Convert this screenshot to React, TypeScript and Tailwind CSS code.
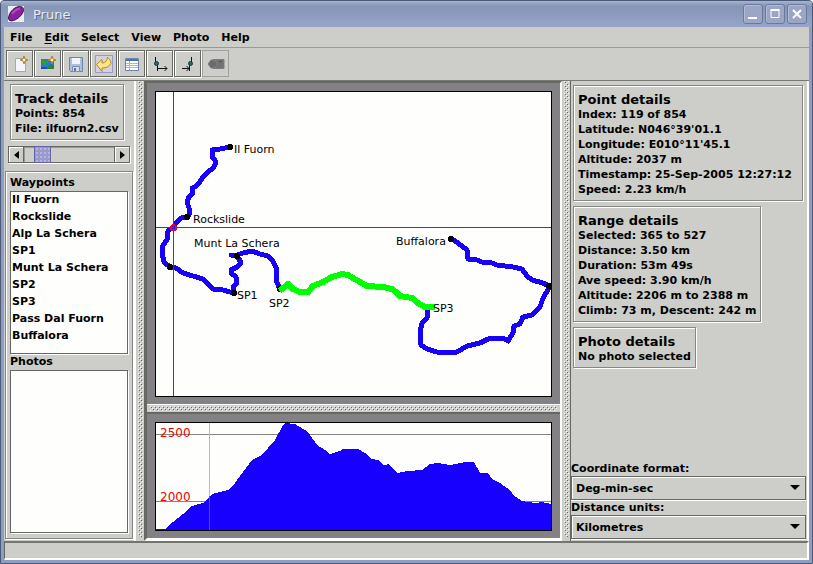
import type { ReactNode } from "react";

const waypoints = [
  "Il Fuorn",
  "Rockslide",
  "Alp La Schera",
  "SP1",
  "Munt La Schera",
  "SP2",
  "SP3",
  "Pass Dal Fuorn",
  "Buffalora",
];

const trackStart =
  "230,147 220,149 212,150 212,157 215,160 215,165 212,169 208,172 203,177 199,183 195,187 192,188 193,193 189,197 187,202 189,208 189,215 187,217 181,218 176,223 173,227 168,231 167,240 163,245 162,253 164,262 170,267 176,268 183,273 193,276 203,279 208,284 213,289 223,290 230,292 234,293 233,287 237,283 236,277 231,273 231,270 237,267 241,263 239,259 237,256 231,255 237,255 243,253 252,251 260,254 268,256 272,260 276,267 276,280 279,287";
const trackRange =
  "282,289 288,284 293,289 300,292 308,292 313,286 323,282 332,277 342,274 348,275 353,278 360,282 367,286 383,287 392,289 396,292 400,296 412,298 418,303 425,307 432,307";
const trackEnd =
  "427,309 427,318 422,323 420,332 421,345 427,349 437,352 457,352 467,346 480,343 488,339 503,338 508,341 513,333 514,326 520,324 523,317 532,315 540,307 543,298 548,290 549,286 543,283 532,280 527,276 522,269 513,267 497,265 492,263 482,262 477,260 468,259 467,250 458,243 452,239";
const profile =
  "156,529 165,529 173,522 183,514 192,506 203,503 212,494 228,490 235,483 240,476 252,460 262,455 275,440 283,425 285,423 295,424 300,427 308,432 317,445 325,450 330,454 340,451 343,449 358,449 365,453 372,459 378,460 384,465 389,464 397,473 407,471 422,470 430,464 438,463 450,465 465,462 474,462 480,473 488,473 492,479 500,483 511,491 513,495 522,501 535,503 542,502 551,504 551,530 156,530";

const markers = [
  [230, 147],
  [187, 217],
  [170, 267],
  [234, 293],
  [237, 256],
  [280, 289],
  [451, 239],
  [549, 286],
  [430, 307],
];

const mapLabels: [string, number, number][] = [
  ["Il Fuorn", 234, 153],
  ["Rockslide", 193, 223],
  ["Munt La Schera", 194, 247],
  ["SP1", 237, 299],
  ["SP2", 269, 307],
  ["Buffalora", 396, 245],
  ["SP3", 433, 312],
];

function Bumps({ id, className }: { id: string; className: string }) {
  return (
    <svg className={className} aria-hidden="true">
      <defs>
        <pattern id={id} width="4" height="4" patternUnits="userSpaceOnUse">
          <path d="M0 0h1v1H0zM2 2h1v1H2z" fill="#fff" />
          <path d="M1 1h1v1H1zM3 3h1v1H3z" fill="#666963" />
        </pattern>
      </defs>
      <rect width="100%" height="100%" fill={`url(#${id})`} />
    </svg>
  );
}

function Star() {
  return (
    <path
      d="M12 0l1 3 3 1-3 1-1 3-1-3-3-1 3-1z"
      fill="#fff6c0"
      stroke="#a8842c"
      strokeWidth="1"
    />
  );
}

const tools: { label: string; icon: ReactNode; disabled?: boolean }[] = [
  {
    label: "Open file",
    icon: (
      <>
        <path d="M3.5 2.5h10v13h-10z" fill="#f4f6fb" stroke="#a5a9b4" />
        <Star />
      </>
    ),
  },
  {
    label: "Add photos",
    icon: (
      <>
        <path d="M1 3h13v10H1z" fill="#2f74d8" />
        <path d="M6 13l3-3 2-2 3 2v3z" fill="#238a2a" />
        <path d="M2 4h3v1h3v2H6v2H3V7H2z" fill="#25a52d" />
        <path d="M1 11h6v2H1z" fill="#1d50a0" />
        <path d="M8 4h2v2H8z" fill="#d33" />
        <Star />
      </>
    ),
  },
  {
    label: "Save",
    icon: (
      <>
        <path d="M1.5 1.5h13v14h-12l-1-1z" fill="#aebfdb" stroke="#6c85ad" />
        <path d="M4 2h8v6H4z" fill="#f1f4f8" />
        <path d="M4.500 10.500h7v5h-7z" fill="#d7dde5" stroke="#7e8fac" />
        <path d="M6 12h2v3H6z" fill="#5676a7" />
      </>
    ),
  },
  {
    label: "Undo",
    icon: (
      <>
        <path d="M-.5-.5h17v17h-17z" fill="#d3d3dc" stroke="#9898cc" />
        <path
          d="M.5 8.500L6 3.500V7c3 0 5-2 5.500-5.500 2 1 3.500 3.500 3.500 6-1.500 3-5 4.500-9 4.500v3.500z"
          fill="#ffe58a"
          stroke="#bd8618"
          strokeLinejoin="round"
        />
      </>
    ),
  },
  {
    label: "Edit point",
    icon: (
      <>
        <path d="M1.500 2.500h13v12h-13z" fill="#fff" stroke="#6d86ad" />
        <path d="M2 3h12v2H2z" fill="#4f74ae" />
        <path d="M2 7.500h12M2 9.500h12M2 11.500h12M5.500 5v9" stroke="#a9b6cf" />
      </>
    ),
  },
  {
    label: "Set range start",
    icon: (
      <>
        <path d="M3.500 1v5M5.500 9v6" stroke="#111" />
        <path d="M5 12.500h10M12.500 10l2.500 2.500-2.500 2.500" stroke="#111" fill="none" />
        <circle cx="4.500" cy="7.500" r="2" fill="#27686b" stroke="#123b3e" />
      </>
    ),
  },
  {
    label: "Set range end",
    icon: (
      <>
        <path d="M11.500 1v5M9.500 9v6" stroke="#111" />
        <path d="M2 12.500h7M6.500 10L9 12.500 6.500 15" stroke="#111" fill="none" />
        <circle cx="10.500" cy="7.500" r="2" fill="#27686b" stroke="#123b3e" />
      </>
    ),
  },
  {
    label: "Connect photo",
    disabled: true,
    icon: (
      <>
        <path d="M5 3.500h11v9H5z" fill="#727272" stroke="#7c7c7c" />
        <path d="M0 8l3-4h4l2 4-2 4H3z" fill="#6a6a6a" stroke="#808080" />
        <path d="M11 5h3v1h-3z" fill="#555" />
      </>
    ),
  },
];

function Details({
  title,
  lines,
  className,
}: {
  title: string;
  lines: string[];
  className?: string;
}) {
  return (
    <section
      className={`border border-[#848884] px-1 pt-[7px] pb-[3px] shadow-[inset_1px_1px_#fff,1px_1px_#fff] ${className ?? ""}`}
    >
      <h2 className="text-[13px] leading-[14px]">{title}</h2>
      {lines.map((line) => (
        <p key={line} className="whitespace-nowrap">
          {line}
        </p>
      ))}
    </section>
  );
}

function Combo({ id, label, options }: { id: string; label: string; options: string[] }) {
  return (
    <div>
      <label htmlFor={id} className="block">
        {label}
      </label>
      <div className="relative">
        <select
          id={id}
          className="block h-6 w-full appearance-none border border-[#666963] bg-[#cdcec9] pl-1 shadow-[inset_1px_1px_#fff,0_1px_#fff]"
        >
          {options.map((o) => (
            <option key={o}>{o}</option>
          ))}
        </select>
        <svg
          viewBox="0 0 10 5"
          className="pointer-events-none absolute top-[9px] right-1.5 h-[5px] w-2.5"
          aria-hidden="true"
        >
          <path d="M0 0h10L5 5z" />
        </svg>
      </div>
    </div>
  );
}

function ListBox({ id, label, items }: { id: string; label: string; items: string[] }) {
  return (
    <div className="flex min-h-0 flex-1 flex-col">
      <label htmlFor={id} className="leading-4">
        {label}
      </label>
      <select
        id={id}
        size={9}
        className="min-h-0 w-full flex-1 appearance-none overflow-hidden border border-[#666963] bg-[#fefefc] pt-px shadow-[1px_1px_#fff]"
      >
        {items.map((item) => (
          <option key={item} className="h-[17px] px-px py-0 leading-[17px] font-bold">
            {item}
          </option>
        ))}
      </select>
    </div>
  );
}

const arrowButton =
  "flex h-full w-4 items-center justify-center border border-[#666963] shadow-[inset_1px_1px_#fff]";
const windowButton =
  "flex h-5 w-5 items-center justify-center rounded-[3px] border border-[#687aa2] bg-[#9aa6c4] shadow-[inset_1px_1px_#b3bcd3]";

export default function App() {
  return (
    <div className="flex h-screen w-full flex-col rounded-t-[4px] border border-[#4b5978] bg-[#8f9dc1] font-['DejaVu_Sans',sans-serif] text-[11px] leading-[15px] font-bold text-black">
      <header className="flex h-[26px] shrink-0 items-center rounded-t-[3px] bg-linear-to-b from-[#a9b4cf] via-[#8495b5] via-20% to-[#98a5c9] pr-[5px] pl-[7px]">
        <svg viewBox="0 0 16 16" className="h-4 w-4" aria-hidden="true">
          <path d="M0 0h16v16H0z" fill="#e9edf4" />
          <path
            d="M.5 12C1 7 5 2 10 .8c4-1 6 1 5.500 3.700C14.500 9 10 13 5.500 14.500c-3 1-5 0-5-2.500z"
            fill="#8a219c"
            stroke="#3c0d4a"
          />
          <path d="M4 8C6 5 9 3 12 2.500" stroke="#b04fc0" strokeWidth="2" fill="none" />
        </svg>
        <h1 className="ml-2 flex-1 pl-px text-[13px] font-normal text-[#e8ebf2] [text-shadow:1px_1px_#596987]">
          Prune
        </h1>
        <div className="flex gap-0.5">
          <button type="button" aria-label="Minimise" className={windowButton}>
            <svg viewBox="0 0 12 12" className="h-3 w-3">
              <path d="M1 9h9v2H1z" fill="#fff" />
            </svg>
          </button>
          <button type="button" aria-label="Maximise" className={windowButton}>
            <svg viewBox="0 0 12 12" className="h-3 w-3">
              <path d="M2 2.500h8v7H2z" fill="none" stroke="#fff" />
              <path d="M1.500 2h9" stroke="#fff" strokeWidth="2" />
            </svg>
          </button>
          <button type="button" aria-label="Close" className={windowButton}>
            <svg viewBox="0 0 12 12" className="h-3 w-3">
              <path d="M2 2l8 8M10 2l-8 8" stroke="#fff" strokeWidth="2" />
            </svg>
          </button>
        </div>
      </header>

      <div className="mx-[3px] mb-[3px] flex min-h-0 flex-1 flex-col bg-[#cdcec9]">
        <nav className="flex h-[21px] shrink-0 items-center border-b border-[#999a98]">
          <button type="button" className="px-1.5">
            File
          </button>
          <button type="button" className="px-1.5 underline-offset-2">
            <span className="underline">E</span>dit
          </button>
          <button type="button" className="px-1.5">
            Select
          </button>
          <button type="button" className="px-1.5">
            View
          </button>
          <button type="button" className="px-1.5">
            Photo
          </button>
          <button type="button" className="px-1.5">
            Help
          </button>
        </nav>

        <div className="flex h-8 shrink-0 gap-px pt-0.5 pl-0.5">
          {tools.map(({ label, icon, disabled }) => (
            <button
              key={label}
              type="button"
              aria-label={label}
              disabled={disabled}
              className="flex h-[27px] w-[27px] items-center justify-center border border-[#666963] shadow-[inset_1px_1px_#fff,1px_1px_#fff] disabled:border-[#a0a19e] disabled:shadow-none"
            >
              <svg viewBox="0 0 16 16" fill="none" className="h-4 w-4 overflow-visible">
                {icon}
              </svg>
            </button>
          ))}
        </div>

        <main className="flex min-h-0 flex-1 border-t border-[#777a75]">
          <aside className="flex w-[132px] shrink-0 flex-col border-r-2 border-white pt-[3px]">
            <Details
              title="Track details"
              lines={["Points: 854", "File: ilfuorn2.csv"]}
              className="ml-1.5 w-fit"
            />
            <div className="mx-1 mt-1.5 flex h-[17px] shrink-0 shadow-[1px_1px_#fff]">
              <button type="button" aria-label="Previous point" className={arrowButton}>
                <svg viewBox="0 0 5 8" className="h-2 w-[5px]">
                  <path d="M5 0v8L0 4z" />
                </svg>
              </button>
              <input
                type="range"
                aria-label="Current point"
                min={1}
                max={854}
                defaultValue={119}
                className="h-full min-w-0 flex-1 appearance-none border-y border-[#666963] bg-[#cdcec9] shadow-[inset_1px_1px_#999] [&::-webkit-slider-thumb]:h-[17px] [&::-webkit-slider-thumb]:w-[17px] [&::-webkit-slider-thumb]:appearance-none [&::-webkit-slider-thumb]:border [&::-webkit-slider-thumb]:border-[#6464a0] [&::-webkit-slider-thumb]:bg-[#9999cc] [&::-webkit-slider-thumb]:bg-[radial-gradient(#b4b4e4_1px,transparent_1px)] [&::-webkit-slider-thumb]:bg-size-[4px_4px]"
              />
              <button type="button" aria-label="Next point" className={arrowButton}>
                <svg viewBox="0 0 5 8" className="h-2 w-[5px]">
                  <path d="M0 0v8l5-4z" />
                </svg>
              </button>
            </div>
            <div className="mx-px mt-2 mb-0.5 flex min-h-0 flex-1 flex-col border border-[#848884] px-1 pt-[3px] pb-[5px] shadow-[inset_1px_1px_#fff,1px_1px_#fff]">
              <ListBox id="waypoints" label="Waypoints" items={waypoints} />
              <ListBox id="photos" label="Photos" items={[]} />
            </div>
          </aside>

          <div className="w-2 shrink-0 px-0.5 pb-1">
            <Bumps id="bumps-left" className="h-full w-[5px]" />
          </div>

          <div className="flex min-w-0 flex-1 flex-col border-t-2 border-r-2 border-b-[3px] border-l-[3px] border-t-[#666963] border-r-white border-b-white border-l-[#666963]">
            <div className="min-h-0 flex-1 bg-[#848184] px-2 pt-2 pb-[7px]">
              <svg
                viewBox="156 92 395 304"
                shapeRendering="crispEdges"
                role="img"
                aria-label="Track map"
                className="h-full w-full border border-black bg-[#fefefc] font-normal"
              >
                <g fill="none" stroke="#1800ff" strokeWidth="5" strokeLinejoin="round">
                  <polyline points={trackStart} />
                  <polyline points={trackEnd} />
                </g>
                {markers.map(([x, y]) => (
                  <circle key={`${x}-${y}`} cx={x} cy={y} r="3" />
                ))}
                <polyline
                  points={trackRange}
                  fill="none"
                  stroke="#0f0"
                  strokeWidth="6"
                  strokeLinejoin="round"
                  strokeLinecap="square"
                />
                <path d="M156 227.500h395M173.500 92v304" stroke="#f0000c" />
                <circle cx="173.500" cy="227.500" r="2.500" fill="none" stroke="#f00" strokeWidth="2" />
                {mapLabels.map(([text, x, y]) => (
                  <text key={text} x={x} y={y}>
                    {text}
                  </text>
                ))}
              </svg>
            </div>
            <div className="h-2.5 shrink-0 border-t border-b-2 border-t-white border-b-[#666963] bg-[#cdcec9] px-[3px] pt-px">
              <Bumps id="bumps-middle" className="h-[5px] w-full" />
            </div>
            <div className="h-[124px] shrink-0 bg-[#848184] px-2 pt-2 pb-[7px]">
              <svg
                viewBox="156 423 395 107"
                shapeRendering="crispEdges"
                role="img"
                aria-label="Altitude profile"
                className="h-full w-full border border-black bg-[#fefefc] font-normal"
              >
                <path d="M156 434.500h395M156 501.500h395" stroke="#848484" />
                <polygon points={profile} fill="#1800ff" />
                <path d="M209.500 423v73" stroke="#f5c400" />
                <path d="M209.500 496v34" stroke="#f01050" />
                <g fill="#f00000" fontSize="12">
                  <text x="160" y="437">
                    2500
                  </text>
                  <text x="160" y="501">
                    2000
                  </text>
                </g>
              </svg>
            </div>
          </div>

          <div className="w-2 shrink-0 px-0.5 pb-1">
            <Bumps id="bumps-right" className="h-full w-[5px]" />
          </div>

          <aside className="flex w-[239px] shrink-0 flex-col border-r-2 border-l border-r-white border-l-[#666963]">
            <div className="flex flex-1 flex-col items-start gap-[5px] pt-1 pr-1 pl-0.5">
              <Details
                title="Point details"
                lines={[
                  "Index: 119 of 854",
                  "Latitude: N046°39'01.1",
                  "Longitude: E010°11'45.1",
                  "Altitude: 2037 m",
                  "Timestamp: 25-Sep-2005 12:27:12",
                  "Speed: 2.23 km/h",
                ]}
                className="w-full"
              />
              <Details
                title="Range details"
                lines={[
                  "Selected: 365 to 527",
                  "Distance: 3.50 km",
                  "Duration: 53m 49s",
                  "Ave speed: 3.90 km/h",
                  "Altitude: 2206 m to 2388 m",
                  "Climb: 73 m, Descent: 242 m",
                ]}
              />
              <Details title="Photo details" lines={["No photo selected"]} />
            </div>
            <div className="pr-px pb-0.5">
              <Combo
                id="coordinate-format"
                label="Coordinate format:"
                options={["Deg-min-sec", "Deg-min", "Degrees"]}
              />
              <Combo
                id="distance-units"
                label="Distance units:"
                options={["Kilometres", "Miles"]}
              />
            </div>
          </aside>
        </main>

        <footer className="h-[19px] shrink-0 border-t-2 border-r-2 border-b-2 border-l border-t-[#73766f] border-r-white border-b-white border-l-[#666963]" />
      </div>
    </div>
  );
}
